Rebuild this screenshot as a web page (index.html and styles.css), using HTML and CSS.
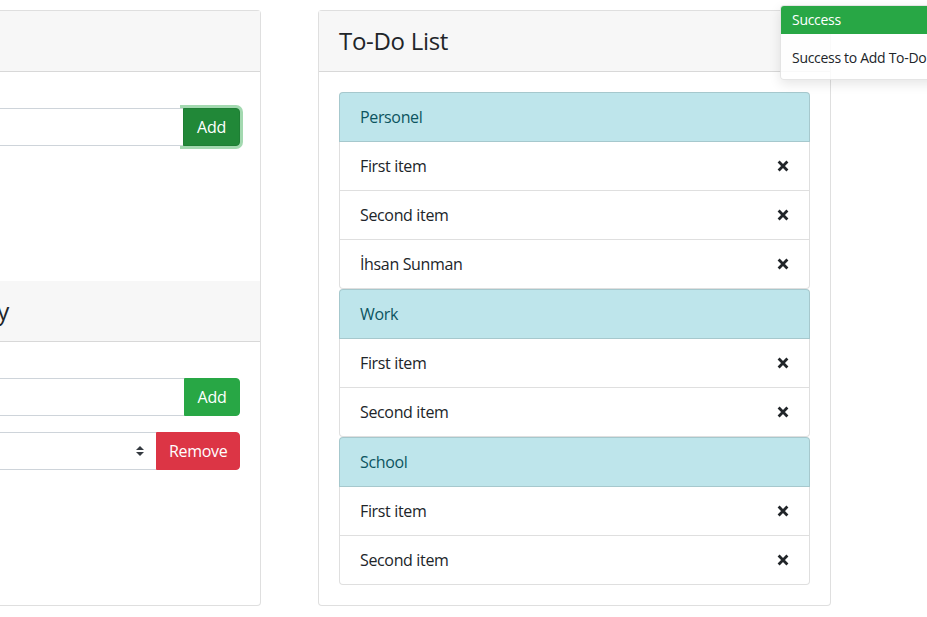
FILE: index.html
```html
<!DOCTYPE html>
<html lang="en">
<head>
<meta charset="utf-8">
<title>To-Do List</title>
<link rel="stylesheet" href="styles.css">
</head>
<body>
<div class="page">
  <div class="card left-card">
    <div class="card-header"><h4 class="card-title">Add To-Do</h4></div>
    <div class="card-body first-body">
      <div class="input-group">
        <div class="form-control"></div>
        <button class="btn btn-success focused">Add</button>
      </div>
    </div>
    <div class="card-header sub-header"><h4 class="card-title">Add or Remove Category</h4></div>
    <div class="card-body second-body">
      <div class="input-group">
        <div class="form-control"></div>
        <button class="btn btn-success">Add</button>
      </div>
      <div class="input-group">
        <div class="form-control select">
          <svg class="select-arrow" width="8" height="10" viewBox="0 0 4 5"><path fill="#343a40" d="M2 0L0 2h4zm0 5L0 3h4z"/></svg>
        </div>
        <button class="btn btn-danger">Remove</button>
      </div>
    </div>
  </div>

  <div class="card right-card">
    <div class="card-header"><h4 class="card-title">To-Do List</h4></div>
    <div class="card-body list-body">
      <ul class="list-group">
        <li class="list-item list-head">Personel</li>
        <li class="list-item"><span>First item</span><svg class="x-icon" width="12" height="12" viewBox="0 0 12 12"><path d="M1.6 1.6L10.4 10.4M10.4 1.6L1.6 10.4" stroke="#212529" stroke-width="2.8"/></svg></li>
        <li class="list-item"><span>Second item</span><svg class="x-icon" width="12" height="12" viewBox="0 0 12 12"><path d="M1.6 1.6L10.4 10.4M10.4 1.6L1.6 10.4" stroke="#212529" stroke-width="2.8"/></svg></li>
        <li class="list-item"><span>İhsan Sunman</span><svg class="x-icon" width="12" height="12" viewBox="0 0 12 12"><path d="M1.6 1.6L10.4 10.4M10.4 1.6L1.6 10.4" stroke="#212529" stroke-width="2.8"/></svg></li>
      </ul>
      <ul class="list-group">
        <li class="list-item list-head">Work</li>
        <li class="list-item"><span>First item</span><svg class="x-icon" width="12" height="12" viewBox="0 0 12 12"><path d="M1.6 1.6L10.4 10.4M10.4 1.6L1.6 10.4" stroke="#212529" stroke-width="2.8"/></svg></li>
        <li class="list-item"><span>Second item</span><svg class="x-icon" width="12" height="12" viewBox="0 0 12 12"><path d="M1.6 1.6L10.4 10.4M10.4 1.6L1.6 10.4" stroke="#212529" stroke-width="2.8"/></svg></li>
      </ul>
      <ul class="list-group">
        <li class="list-item list-head">School</li>
        <li class="list-item"><span>First item</span><svg class="x-icon" width="12" height="12" viewBox="0 0 12 12"><path d="M1.6 1.6L10.4 10.4M10.4 1.6L1.6 10.4" stroke="#212529" stroke-width="2.8"/></svg></li>
        <li class="list-item"><span>Second item</span><svg class="x-icon" width="12" height="12" viewBox="0 0 12 12"><path d="M1.6 1.6L10.4 10.4M10.4 1.6L1.6 10.4" stroke="#212529" stroke-width="2.8"/></svg></li>
      </ul>
    </div>
  </div>
</div>

<div class="toast">
  <div class="toast-header">Success</div>
  <div class="toast-body">Success to Add To-Do Item</div>
</div>
</body>
</html>
```

FILE: styles.css
```css
* { box-sizing: border-box; }

html, body {
  margin: 0;
  padding: 0;
  overflow: hidden;
  background: #fff;
}

body {
  font-family: "Open Sans", "Noto Sans", sans-serif;
  font-size: 16px;
  line-height: 1.5;
  color: #212529;
  width: 927px;
  height: 617px;
  position: relative;
}

.page {
  display: flex;
  align-items: flex-start;
  gap: 57px;
  margin-left: -283px;
  padding-top: 10px;
}

.card {
  border: 1px solid rgba(0, 0, 0, 0.125);
  border-radius: 4px;
  background: #fff;
  flex: none;
  height: 596px;
  display: flex;
  flex-direction: column;
}

.left-card { width: 544px; }
.right-card { width: 513px; }

.card-header {
  height: 61px;
  padding: 1px 20px 0;
  background: #f7f7f7;
  border-bottom: 1px solid rgba(0, 0, 0, 0.125);
  display: flex;
  align-items: center;
  flex: none;
}

.card-title {
  margin: 0;
  font-size: 24px;
  font-weight: 400;
  line-height: 1.2;
  letter-spacing: -0.3px;
}

.first-body {
  height: 209px;
  padding: 36px 20px 0;
  flex: none;
}

.second-body {
  padding: 36px 20px 0;
  display: flex;
  flex-direction: column;
  gap: 16px;
}

.input-group {
  display: flex;
  height: 38px;
}

.form-control {
  flex: 1;
  border: 1px solid #ced4da;
  border-right: 0;
  border-radius: 4px 0 0 4px;
  background: #fff;
  position: relative;
}

.select .select-arrow {
  position: absolute;
  right: 12px;
  top: 13px;
}

.btn {
  font-family: inherit;
  font-size: 16px;
  line-height: 1.5;
  color: #fff;
  border: 1px solid transparent;
  border-radius: 0 4px 4px 0;
  padding: 6px 12px;
  letter-spacing: -0.3px;
  cursor: pointer;
}

.btn-success { background: #28a745; border-color: #28a745; width: 56px; }
.btn-success.focused {
  background: #218838;
  border-color: #1e7e34;
  box-shadow: 0 0 0 3px rgba(72, 180, 97, 0.5);
  width: 57px;
}
.btn-danger { background: #dc3545; border-color: #dc3545; width: 84px; }

.list-body {
  padding: 20px;
}

.list-group {
  list-style: none;
  margin: 0;
  padding: 0;
}

.list-item {
  display: flex;
  align-items: center;
  justify-content: space-between;
  height: 50px;
  padding: 0 20px;
  border: 1px solid rgba(0, 0, 0, 0.125);
  letter-spacing: -0.35px;
}

.list-item + .list-item {
  border-top: 0;
  height: 49px;
}

.list-item:first-child {
  border-radius: 4px 4px 0 0;
}

.list-item:last-child {
  border-radius: 0 0 4px 4px;
}

.list-head {
  background: #bee5eb;
  color: #0c5460;
}

.x-icon { flex: none; }

.toast {
  position: absolute;
  left: 780px;
  top: 5px;
  width: 350px;
  background: rgba(255, 255, 255, 0.85);
  border: 1px solid rgba(0, 0, 0, 0.1);
  border-radius: 4px;
  box-shadow: 0 4px 12px rgba(0, 0, 0, 0.1);
  font-size: 14px;
  overflow: hidden;
}

.toast-header {
  background: #28a745;
  color: #fff;
  padding: 3px 11px 4px;
  line-height: 21px;
  letter-spacing: -0.3px;
}

.toast-body {
  padding: 13px 11px 11px;
  line-height: 21px;
  letter-spacing: -0.3px;
}
```
